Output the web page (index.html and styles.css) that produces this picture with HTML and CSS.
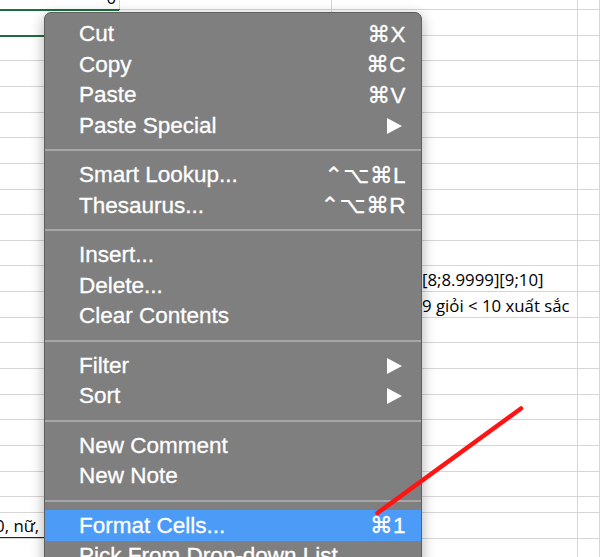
FILE: index.html
```html
<!DOCTYPE html>
<html lang="vi">
<head>
<meta charset="utf-8">
<title>Context menu</title>
<link rel="stylesheet" href="styles.css">
</head>
<body>
<div class="sheet">
  <div class="row"><div class="cell num">0</div><div class="cell"></div><div class="cell"></div><div class="cell"></div></div>
  <div class="row"><div class="cell selected"></div><div class="cell"></div><div class="cell"></div><div class="cell"></div></div>
  <div class="row"><div class="cell"></div><div class="cell"></div><div class="cell"></div><div class="cell"></div></div>
  <div class="row"><div class="cell"></div><div class="cell"></div><div class="cell"></div><div class="cell"></div></div>
  <div class="row"><div class="cell"></div><div class="cell"></div><div class="cell"></div><div class="cell"></div></div>
  <div class="row"><div class="cell"></div><div class="cell"></div><div class="cell"></div><div class="cell"></div></div>
  <div class="row"><div class="cell"></div><div class="cell"></div><div class="cell"></div><div class="cell"></div></div>
  <div class="row"><div class="cell"></div><div class="cell"></div><div class="cell"></div><div class="cell"></div></div>
  <div class="row"><div class="cell"></div><div class="cell"></div><div class="cell"></div><div class="cell"></div></div>
  <div class="row"><div class="cell"></div><div class="cell"></div><div class="cell"></div><div class="cell"></div></div>
  <div class="row"><div class="cell"></div><div class="cell"></div><div class="cell"></div><div class="cell"></div></div>
  <div class="row"><div class="cell"></div><div class="cell"></div><div class="cell text">[8;8.9999][9;10]</div><div class="cell"></div></div>
  <div class="row"><div class="cell"></div><div class="cell"></div><div class="cell text">9 giỏi &lt; 10 xuất sắc</div><div class="cell"></div></div>
  <div class="row"><div class="cell"></div><div class="cell"></div><div class="cell"></div><div class="cell"></div></div>
  <div class="row"><div class="cell"></div><div class="cell"></div><div class="cell"></div><div class="cell"></div></div>
  <div class="row"><div class="cell"></div><div class="cell"></div><div class="cell"></div><div class="cell"></div></div>
  <div class="row"><div class="cell"></div><div class="cell"></div><div class="cell"></div><div class="cell"></div></div>
  <div class="row"><div class="cell"></div><div class="cell"></div><div class="cell"></div><div class="cell"></div></div>
  <div class="row"><div class="cell"></div><div class="cell"></div><div class="cell"></div><div class="cell"></div></div>
  <div class="row"><div class="cell"></div><div class="cell"></div><div class="cell"></div><div class="cell"></div></div>
  <div class="row short"><div class="cell"></div><div class="cell"></div><div class="cell"></div><div class="cell"></div></div>
  <div class="row tall"><div class="cell left-text">10, nữ, học sinh</div><div class="cell"></div><div class="cell"></div><div class="cell"></div></div>
  <div class="row"><div class="cell"></div><div class="cell"></div><div class="cell"></div><div class="cell"></div></div>
</div>

<div class="menu">
  <div class="item"><span>Cut</span><span class="key">⌘X</span></div>
  <div class="item"><span>Copy</span><span class="key">⌘C</span></div>
  <div class="item"><span>Paste</span><span class="key">⌘V</span></div>
  <div class="item"><span>Paste Special</span><svg class="arrow" viewBox="0 0 15 16"><polygon points="0,0 15,8 0,16"/></svg></div>
  <div class="sep"></div>
  <div class="item"><span>Smart Lookup...</span><span class="key">⌃⌥⌘L</span></div>
  <div class="item"><span>Thesaurus...</span><span class="key">⌃⌥⌘R</span></div>
  <div class="sep"></div>
  <div class="item"><span>Insert...</span></div>
  <div class="item"><span>Delete...</span></div>
  <div class="item"><span>Clear Contents</span></div>
  <div class="sep"></div>
  <div class="item"><span>Filter</span><svg class="arrow" viewBox="0 0 15 16"><polygon points="0,0 15,8 0,16"/></svg></div>
  <div class="item"><span>Sort</span><svg class="arrow" viewBox="0 0 15 16"><polygon points="0,0 15,8 0,16"/></svg></div>
  <div class="sep"></div>
  <div class="item"><span>New Comment</span></div>
  <div class="item"><span>New Note</span></div>
  <div class="sep"></div>
  <div class="item active"><span>Format Cells...</span><span class="key">⌘1</span></div>
  <div class="item"><span>Pick From Drop-down List</span></div>
</div>

<svg class="annot" width="600" height="557" viewBox="0 0 600 557">
  <line x1="377.5" y1="513" x2="521" y2="408.5" stroke="#ff1414" stroke-width="4.5" stroke-linecap="round"/>
</svg>
</body>
</html>
```

FILE: styles.css
```css
html, body {
  margin: 0;
  padding: 0;
  background: #ffffff;
  overflow: hidden;
}

body {
  width: 600px;
  height: 557px;
  position: relative;
}

.sheet {
  margin-top: -15.6px;
  font-family: "Open Sans", "Noto Sans", sans-serif;
  font-size: 16.8px;
  color: #000;
}

.row {
  display: grid;
  grid-template-columns: 120px 212px 246px 1fr;
  height: 25.65px;
  box-sizing: border-box;
  border-bottom: 1px solid #d6d6d6;
}

.row.short { height: 15.6px; }
.row.tall { height: 26px; }

.cell {
  border-right: 1px solid #d6d6d6;
  box-sizing: border-box;
  white-space: nowrap;
  display: flex;
  align-items: center;
  min-width: 0;
  padding-top: 2px;
}

.cell.num {
  justify-content: flex-end;
  padding-right: 3px;
}

.cell.selected {
  border-right-color: transparent;
  box-shadow:
    inset 0 1px 0 0 #1c6d40,
    0 -1px 0 0 #1c6d40,
    0 2px 0 0 #1c6d40;
}

.cell.text {
  padding-left: 90px;
  overflow: visible;
}

.cell.left-text {
  overflow: hidden;
  text-indent: -14.5px;
}

.row.tall .cell.left-text {
  border-bottom: 1.5px solid #222;
}

/* context menu overlay */
.menu {
  position: absolute;
  left: 44px;
  top: 12px;
  width: 378px;
  height: 580px;
  box-sizing: border-box;
  padding-top: 5.75px;
  background: #7f7f7f;
  border: 1px solid #5f5f5f;
  border-radius: 7px;
  box-shadow: 0 4px 14px rgba(0, 0, 0, 0.32);
  font-family: "Liberation Sans", "DejaVu Sans", sans-serif;
  font-size: 22.5px;
  color: #ffffff;
  -webkit-text-stroke: 0.3px #ffffff;
  overflow: hidden;
}

.item {
  height: 30.5px;
  display: flex;
  align-items: center;
  justify-content: space-between;
  padding: 0 15px 0 34px;
}

.item.active {
  background: #4b9bf7;
}

.key {
  font-family: "Liberation Sans", "DejaVu Sans", sans-serif;
  letter-spacing: 0.5px;
}

.arrow {
  width: 15px;
  height: 16px;
  margin-right: 4px;
  fill: #ffffff;
}

.sep {
  height: 2px;
  margin: 8.5px 0;
  background: #a6a6a6;
}

.annot {
  position: absolute;
  left: 0;
  top: 0;
  pointer-events: none;
}
```
